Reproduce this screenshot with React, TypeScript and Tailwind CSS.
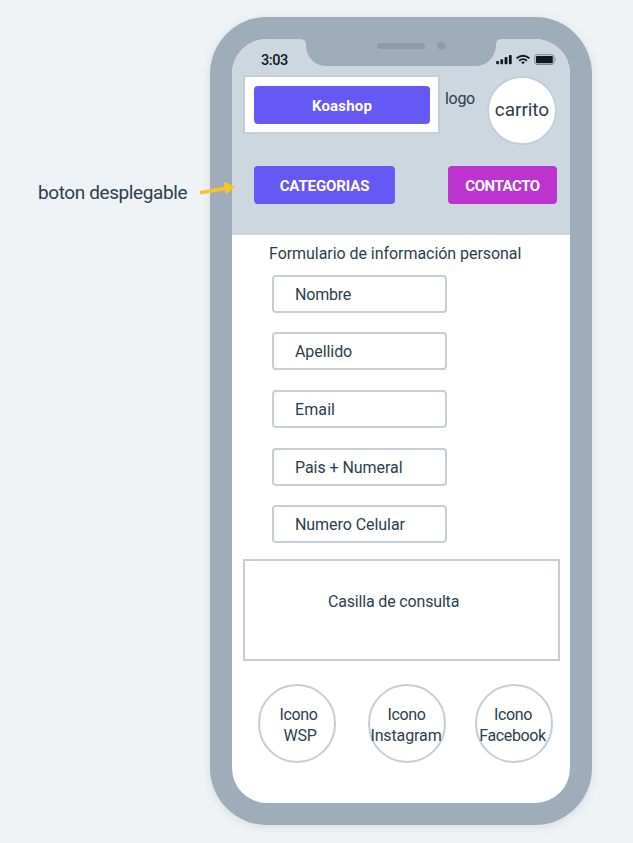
import React from "react";

const fields = [
  { label: "Nombre", gap: "mt-0", tracking: "tracking-[-0.2px]" },
  { label: "Apellido", gap: "mt-[19px]", tracking: "tracking-[-0.07px]" },
  { label: "Email", gap: "mt-5", tracking: "tracking-[0.1px]" },
  { label: "Pais + Numeral", gap: "mt-5", tracking: "tracking-[-0.06px]" },
  { label: "Numero Celular", gap: "mt-[19px]", tracking: "tracking-[-0.06px]" },
];

function StatusIcons() {
  return (
    <svg className="block" width="62" height="12" viewBox="0 0 62 12" fill="#101820">
      <rect x="0.2" y="7" width="2.7" height="3.2" rx="0.8" />
      <rect x="4.4" y="5.2" width="2.7" height="5" rx="0.8" />
      <rect x="8.6" y="3" width="2.8" height="7.2" rx="0.8" />
      <rect x="12.9" y="1" width="2.8" height="9.2" rx="0.8" />
      <g fill="none" stroke="#101820" strokeWidth="1.8">
        <path d="M20.6 4.3Q27 -0.9 33.4 4.3" />
        <path d="M23.1 6.7Q27 3.5 30.9 6.7" />
      </g>
      <path d="M25 8.1Q27 6.7 29 8.1L27 10.2Z" />
      <rect x="38.8" y="0.7" width="19.2" height="9.8" rx="2.3" fill="none" stroke="#7e8991" />
      <rect x="40" y="2" width="16.8" height="7.2" rx="1" />
      <path d="M59.2 3.8Q61 5.6 59.2 7.4Z" fill="#7e8991" />
    </svg>
  );
}

function Social({ name, tracking, nudge, lead }: { name: string; tracking: string; nudge: string; lead: string }) {
  return (
    <div className="flex h-[79px] w-[78px] shrink-0 flex-col items-center justify-center rounded-full border-2 border-[#c3ced9] pt-0.5">
      <span className={`whitespace-nowrap leading-[21px] tracking-[-0.4px] ${lead}`}>Icono</span>
      <span className={`whitespace-nowrap leading-[21px] ${tracking} ${nudge}`}>{name}</span>
    </div>
  );
}

export default function App() {
  return (
    <div className="relative flex h-[843px] w-[633px] overflow-hidden bg-[#eff3f6] font-['Roboto','Liberation_Sans',sans-serif] text-base text-[#2d3e4c]">
      <div className="w-[210px] shrink-0 pl-[38px] pt-[181px]">
        <span className="block whitespace-nowrap text-[19px] leading-6 tracking-[-0.4px]">boton desplegable</span>
      </div>

      <div className="mt-[17px] h-[808px] w-[382px] shrink-0 rounded-[57px] bg-[#9eadb9] py-[22px] pl-[21.5px] pr-[22px] shadow-[0_2px_10px_rgba(60,75,90,0.12)]">
        <div className="flex h-[764px] flex-col overflow-hidden rounded-[35px] bg-white">
          <header className="h-[196px] shrink-0 bg-[#cdd7e0]">
            <div className="flex h-9 items-start">
              <span className="w-[67px] shrink-0 whitespace-nowrap pl-[29.5px] pt-[11.5px] text-[14.5px] font-medium leading-5 tracking-[-0.4px] text-[#101820]">3:03</span>
              <svg className="block shrink-0" width="203" height="27" viewBox="0 0 203 27">
                <path d="M0 0H203Q197 0 197 5C197 18 188.5 27 176 27H28C15.5 27 7 18 7 5Q7 0 0 0Z" fill="#9eadb9" />
                <rect x="78" y="4" width="48" height="6" rx="3" fill="#8d9cab" />
                <circle cx="142.3" cy="6.8" r="4" fill="#8d9cab" />
              </svg>
              <div className="-ml-[5.5px] pt-[15px]"><StatusIcons /></div>
            </div>
            <div className="flex h-[70px] items-start pl-[11.5px]">
              <div className="h-[59px] w-[197px] shrink-0 border-2 border-[#c3ced9] bg-white pl-[9px] pt-[9px]">
                <div className="flex h-[38px] w-[176px] items-center justify-center rounded bg-[#6558f5] font-bold text-white">
                  <span className="pt-0.5 text-[15px] tracking-[0.2px]">Koashop</span>
                </div>
              </div>
              <span className="ml-[5px] mt-3 w-[42px] shrink-0 leading-6 tracking-[-0.3px]">logo</span>
              <div className="mt-[0.5px] flex h-[69px] w-[70px] shrink-0 items-center justify-center rounded-full border-2 border-[#c3ced9] bg-white text-[19px] tracking-[-0.05px]">carrito</div>
            </div>
            <div className="mt-[21px] flex justify-between pl-[22.5px] pr-[13px] text-[15px] font-bold text-white">
              <div className="flex h-[38px] w-[141px] items-center justify-center rounded bg-[#6558f5] pt-0.5 tracking-[-0.1px]">CATEGORIAS</div>
              <div className="flex h-[38px] w-[109px] items-center justify-center rounded bg-[#bc33d0] pt-0.5 tracking-[-0.45px]">CONTACTO</div>
            </div>
          </header>

          <main className="flex flex-col">
            <h1 className="mt-[7px] h-[33px] whitespace-nowrap pl-[37.5px] leading-6 tracking-[-0.05px]">Formulario de información personal</h1>
            {fields.map((f) => (
              <div key={f.label} className={`ml-[40.5px] flex h-[38px] w-[175px] items-center rounded border-2 border-[#c3ced9] pl-[21px] pt-0.5 ${f.gap}`}>
                <span className={`whitespace-nowrap ${f.tracking}`}>{f.label}</span>
              </div>
            ))}
            <div className="ml-[11.5px] mt-4 h-[102px] w-[317px] border-2 border-[#c3ced9] pl-[83px] pt-[29px]">
              <span className="block whitespace-nowrap leading-6 tracking-[-0.17px]">Casilla de consulta</span>
            </div>
            <div className="mt-[23px] flex pl-[26.5px]">
              <Social name="WSP" tracking="tracking-[-0.2px]" nudge="ml-1.5" lead="ml-[3px]" />
              <div className="w-8 shrink-0" />
              <Social name="Instagram" tracking="tracking-[-0.12px]" nudge="-ml-0.5" lead="-ml-px" />
              <div className="w-[29px] shrink-0" />
              <Social name="Facebook" tracking="tracking-[-0.35px]" nudge="-ml-[3px]" lead="-ml-0.5" />
            </div>
          </main>
        </div>
      </div>

      <svg className="absolute left-[196px] top-[176px]" width="44" height="24" viewBox="0 0 44 24">
        <path d="M4 16.7L30 12.3" stroke="#fbc427" strokeWidth="3.6" fill="none" />
        <path d="M28.4 6.5L37.8 10.8L30.2 17.2Z" fill="#fbc427" stroke="#fbc427" strokeWidth="1.2" strokeLinejoin="round" />
      </svg>
    </div>
  );
}
